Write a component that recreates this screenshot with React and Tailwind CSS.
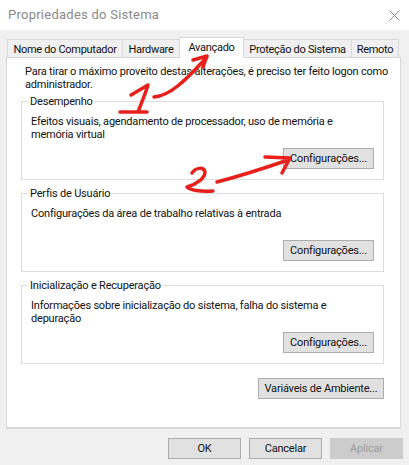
const Btn = ({ children, className = '', disabled }) => (
  <button
    className={`h-[21px] whitespace-nowrap border text-center leading-[18px] ${disabled ? 'border-[#cccccc] bg-[#cccccc] text-[#9d9d9d]' : 'border-[#adadad] bg-[#e1e1e1] text-[#111]'} ${className}`}
  >
    {children}
  </button>
);

const Tab = ({ children, className = '' }) => (
  <div className={`h-[19px] whitespace-nowrap border border-b-0 border-[#d9d9d9] text-center leading-[19px] tracking-[-0.3px] text-[#111] ${className}`}>
    {children}
  </div>
);

const Group = ({ title, children, className = '' }) => (
  <div className={`relative h-[79px] border border-[#dcdcdc] ${className}`}>
    <span className="absolute left-[6px] top-[-8px] bg-white px-[2px] leading-[15px] text-[#111]">{title}</span>
    <p className="ml-[9px] mt-[13px] h-[26px] w-[335px] leading-[13px] text-[#111]">{children}</p>
    <div className="mt-[7px] flex justify-end pr-[9px]">
      <Btn className="w-[91px]">Configurações...</Btn>
    </div>
  </div>
);

const App = () => {
  return (
    <div className="relative flex h-[465px] w-[409px] flex-col overflow-hidden bg-[#f0f0f0] font-['Roboto','Liberation_Sans',sans-serif] text-[11px] tracking-[-0.2px]">
      {/* title bar */}
      <div className="flex h-[30px] items-center justify-between bg-white px-[8px]">
        <span className="text-[13px] tracking-[0.25px] text-[#8a8a8a]">Propriedades do Sistema</span>
        <svg width="11" height="11" viewBox="0 0 11 11" className="mr-[1px]">
          <path d="M0.5 0.5 L10.5 10.5 M10.5 0.5 L0.5 10.5" stroke="#8c8c8c" strokeWidth="1" fill="none" />
        </svg>
      </div>

      {/* tabs */}
      <div className="z-10 ml-[7px] mt-[7px] flex h-[21px] items-end">
        <Tab className="w-[116px]">Nome do Computador</Tab>
        <Tab className="-ml-px w-[58px]">Hardware</Tab>
        <Tab className="-ml-px h-[21px] w-[65px] bg-white">Avançado</Tab>
        <Tab className="-ml-px w-[109px]">Proteção do Sistema</Tab>
        <Tab className="-ml-px w-[48px]">Remoto</Tab>
      </div>

      {/* panel */}
      <div className="ml-[6px] mt-[-1px] h-[372px] w-[395px] border border-b-2 border-[#d9d9d9] bg-white pl-[14px] pr-[16px] pt-[7px]">
        <p className="ml-[4px] h-[36px] whitespace-nowrap leading-[13px] text-[#111]">
          Para tirar o máximo proveito destas alterações, é preciso ter feito logon como
          <br />
          administrador.
        </p>
        <Group title="Desempenho">Efeitos visuais, agendamento de processador, uso de memória e memória virtual</Group>
        <Group title="Perfis de Usuário" className="mt-[13px]">Configurações da área de trabalho relativas à entrada</Group>
        <Group title="Inicialização e Recuperação" className="mt-[13px]">Informações sobre inicialização do sistema, falha do sistema e depuração</Group>
        <div className="mt-[14px] flex justify-end">
          <Btn className="w-[126px]">Variáveis de Ambiente...</Btn>
        </div>
      </div>

      {/* bottom buttons */}
      <div className="mr-[6px] mt-[9px] flex justify-end gap-[8px]">
        <Btn className="w-[73px]">OK</Btn>
        <Btn className="w-[73px]">Cancelar</Btn>
        <Btn className="w-[73px]" disabled>Aplicar</Btn>
      </div>

      {/* red annotations */}
      <svg className="pointer-events-none absolute left-0 top-0 z-20" width="409" height="465" viewBox="0 0 409 465" fill="none">
        <g stroke="#e8201c" strokeWidth="3.5" strokeLinecap="round" strokeLinejoin="round">
          <path d="M131 95 L148 85 C146 92 141 104 138 112 M120 112 L147 112" />
          <path d="M154 97 C170 96 186 80 207 57 M193 60 L207 56 L203 67" />
          <path d="M192 173 C196 167 204 167 205 172 C205 178 197 184 187 187 C190 190 200 192 213 191" />
          <path d="M217 182 C240 176 265 168 288 160 M265 157 L290 158 L282 173" />
        </g>
      </svg>
    </div>
  );
};

export default App;
